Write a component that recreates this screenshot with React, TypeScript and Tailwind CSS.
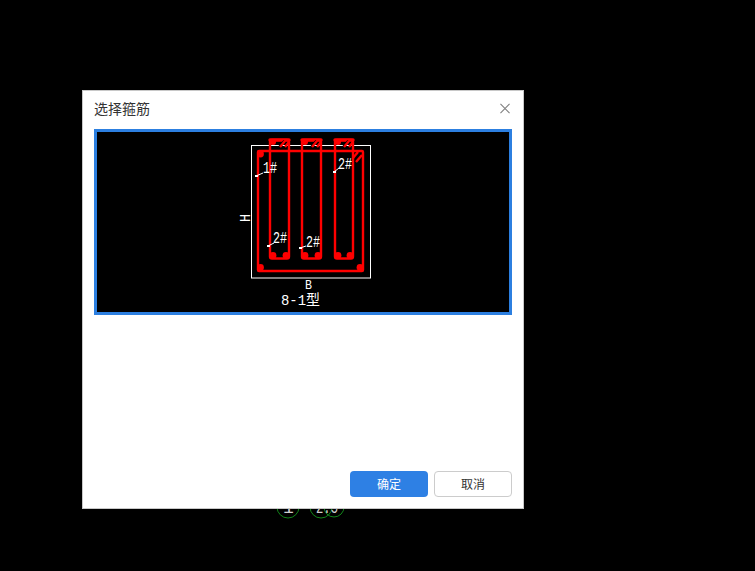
const cad = "font-['Liberation_Mono','Noto_Sans_CJK_SC',monospace]";

function Stirrup({ x, w }: { x: number; w: number }) {
  const r = x + w;
  return (
    <g stroke="#ff0000" fill="none">
      <rect x={x} y={140} width={w} height={118.5} rx={2} strokeWidth={2.4} />
      <line x1={x} y1={140} x2={r} y2={140} strokeWidth={3.4} strokeLinecap="round" />
      <circle cx={x + 3} cy={142} r={3} fill="#ff0000" stroke="none" />
      {/* top hook */}
      <line x1={r - 10} y1={146.5} x2={r - 5} y2={140.5} stroke="#000000" strokeWidth={1.4} />
      <line x1={r - 9} y1={147} x2={r - 4} y2={141} strokeWidth={2.4} />
      <line x1={r - 4} y1={147} x2={r} y2={142} strokeWidth={2.4} />
      {/* bottom corners */}
      <circle cx={x + 3} cy={255.5} r={3.4} fill="#ff0000" stroke="none" />
      <circle cx={r - 3} cy={255.5} r={3.4} fill="#ff0000" stroke="none" />
    </g>
  );
}

function Label({ x, y, lx, ly, ex, ey, text }: { x: number; y: number; lx: number; ly: number; ex: number; ey: number; text: string }) {
  return (
    <g>
      <line x1={lx} y1={ly} x2={ex} y2={ey} stroke="#ffffff" strokeWidth={1} />
      <rect x={lx - 1} y={ly - 1} width={3} height={2} fill="#ffffff" />
      <text x={x} y={y} fontSize={17} textLength={14} lengthAdjust="spacingAndGlyphs" fill="#ffffff" className={cad}>
        {text}
      </text>
    </g>
  );
}

function SectionDrawing() {
  return (
    <svg className="block h-full w-full" viewBox="97 132 412 180">
      <rect x={251.5} y={145.5} width={119} height={132.5} fill="none" stroke="#ffffff" strokeWidth={1} />
      <Stirrup x={270} w={19} />
      <Stirrup x={302} w={19} />
      <Stirrup x={335} w={18} />
      <g stroke="#ff0000" fill="none">
        <rect x={258} y={151} width={105} height={120} rx={1} strokeWidth={2.4} />
        <circle cx={260.5} cy={154} r={3.4} fill="#ff0000" stroke="none" />
        <circle cx={260.5} cy={267.5} r={3.4} fill="#ff0000" stroke="none" />
        <circle cx={360} cy={267.5} r={3.4} fill="#ff0000" stroke="none" />
        <line x1={353} y1={158} x2={358} y2={152} strokeWidth={2.4} />
        <line x1={356} y1={162} x2={362} y2={155} strokeWidth={2.4} />
      </g>
      <Label x={263} y={173} lx={256} ly={176} ex={263} ey={173} text="1#" />
      <Label x={338} y={169} lx={334} ly={172} ex={339} ey={168} text="2#" />
      <Label x={273} y={243} lx={268} ly={246} ex={274} ey={243} text="2#" />
      <Label x={306} y={247} lx={300} ly={248} ex={306} ey={246} text="2#" />
      <text x={305} y={289} fontSize={13} textLength={7} lengthAdjust="spacingAndGlyphs" fill="#ffffff" className={cad}>B</text>
      <text transform="translate(250 222) rotate(-90)" fontSize={14} textLength={8} lengthAdjust="spacingAndGlyphs" fill="#ffffff" className={cad}>H</text>
      <text x={281} y={305} fontSize={15} textLength={39} lengthAdjust="spacingAndGlyphs" fill="#ffffff" className={cad}>8-1型</text>
    </svg>
  );
}

export default function App() {
  return (
    <div className="relative h-[571px] w-[755px] overflow-hidden bg-black">
      {/* drawing behind the dialog */}
      <svg className="absolute left-0 top-0 h-full w-full" viewBox="0 0 755 571">
        <g fill="none" stroke="#12861a" strokeWidth={1}>
          <circle cx={288} cy={507} r={11} />
          <circle cx={321} cy={507} r={11} />
          <circle cx={334} cy={507} r={10} />
        </g>
        <g fill="#d0d0d0" fontSize={18} className={cad}>
          <text x={283} y={513}>1</text>
          <text x={316} y={513} textLength={22} lengthAdjust="spacingAndGlyphs">2.5</text>
        </g>
      </svg>

      {/* dialog */}
      <div className="absolute left-[82px] top-[90px] flex h-[419px] w-[442px] flex-col border border-[#c8c8c8] bg-white font-['Noto_Sans_CJK_SC','Liberation_Sans',sans-serif]">
        <div className="flex h-[38px] items-center justify-between pb-[4px] pl-[11px] pr-[13px]">
          <span className="text-sm text-[#333333]">选择箍筋</span>
          <button className="flex h-[10px] w-[10px] items-center justify-center">
            <svg width="11" height="11" viewBox="0 0 11 11" fill="none" stroke="#808080" strokeWidth={1.2}>
              <path d="M0.5 0.5 L10.5 10.5 M10.5 0.5 L0.5 10.5" />
            </svg>
          </button>
        </div>
        <div className="px-[11px]">
          <div className="h-[186px] border-[3px] border-[#2c7fe0] bg-black">
            <SectionDrawing />
          </div>
        </div>
        <div className="mt-auto flex justify-end gap-1.5 px-[11px] pb-[11px]">
          <button className="h-[26px] w-[78px] rounded bg-[#2e80e4] text-xs text-white">确定</button>
          <button className="h-[26px] w-[78px] rounded border border-[#cccccc] bg-white text-xs text-[#333333]">取消</button>
        </div>
      </div>
    </div>
  );
}
